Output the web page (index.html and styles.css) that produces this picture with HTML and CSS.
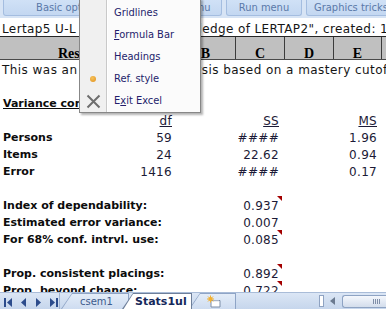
FILE: index.html
```html
<!DOCTYPE html>
<html lang="en">
<head>
    <meta charset="UTF-8">
    <meta name="viewport" content="width=device-width, initial-scale=1.0">
    <title>Lertap5 - Stats1ul</title>
    <link rel="stylesheet" href="styles.css">
</head>
<body>
    <div id="excel">
        <div class="ribbon">
            <div class="rb-btn w-basic">Basic options</div>
            <div class="rb-btn w-setup">Setup menu</div>
            <div class="rb-btn w-run">Run menu</div>
            <div class="rb-btn w-graph">Graphics tricks</div>
        </div>

        <div class="title-row">Lertap5 U-L analysis for "Knowledge of LERTAP2", created: 12/05/2008.</div>

        <div class="col-heads">
            <div class="ch ch-a">Results</div>
            <div class="ch ch-b">B</div>
            <div class="ch ch-c">C</div>
            <div class="ch ch-d">D</div>
            <div class="ch ch-e">E</div>
            <div class="ch ch-f"></div>
        </div>

        <div class="sheet">
            <div class="row"><span class="wide">This was an Upper-Lower analysis based on a mastery cutoff percentage of 70.</span></div>
            <div class="row"></div>
            <div class="row"><span class="lbl u">Variance components</span></div>
            <div class="row"><span class="df u">df</span><span class="ss u">SS</span><span class="ms u">MS</span></div>
            <div class="row"><span class="lbl">Persons</span><span class="df">59</span><span class="ss">####</span><span class="ms">1.96</span></div>
            <div class="row"><span class="lbl">Items</span><span class="df">24</span><span class="ss">22.62</span><span class="ms">0.94</span></div>
            <div class="row"><span class="lbl">Error</span><span class="df">1416</span><span class="ss">####</span><span class="ms">0.17</span></div>
            <div class="row"></div>
            <div class="row"><span class="lbl">Index of dependability:</span><span class="ss flag">0.937</span></div>
            <div class="row"><span class="lbl">Estimated error variance:</span><span class="ss">0.007</span></div>
            <div class="row"><span class="lbl">For 68% conf. intrvl. use:</span><span class="ss flag">0.085</span></div>
            <div class="row"></div>
            <div class="row"><span class="lbl">Prop. consistent placings:</span><span class="ss flag">0.892</span></div>
            <div class="row"><span class="lbl">Prop. beyond chance:</span><span class="ss flag">0.722</span></div>
        </div>

        <div class="tabbar">
            <div class="tab-nav">
                <svg width="56" height="9" viewBox="0 0 56 9">
                    <rect x="0" y="0" width="2" height="9" fill="#2c4c8c"/>
                    <polygon points="8,0 3,4.5 8,9" fill="#2c4c8c"/>
                    <polygon points="22,0 17,4.5 22,9" fill="#2c4c8c"/>
                    <polygon points="32,0 37,4.5 32,9" fill="#2c4c8c"/>
                    <polygon points="46,0 51,4.5 46,9" fill="#2c4c8c"/>
                    <rect x="52" y="0" width="2" height="9" fill="#2c4c8c"/>
                </svg>
            </div>
            <div class="tabs">
                <div class="tab t-csem"><div class="tab-in">csem1</div></div>
                <div class="tab t-stats"><div class="tab-in">Stats1ul</div></div>
                <div class="tab t-new">
                    <div class="tab-in">
                        <svg width="16" height="13" viewBox="0 0 16 13">
                            <path d="M5 5.5 H14 V12 H5 Z" fill="#fff" stroke="#7d8ea8"/>
                            <path d="M7 6 L13 6" stroke="#d8dee8"/>
                            <circle cx="4.5" cy="4" r="2" fill="#f2b030"/>
                            <path d="M4.5 0.5 V7.5 M1 4 H8 M2 1.5 L7 6.5 M7 1.5 L2 6.5" stroke="#f2b030" stroke-width="1"/>
                        </svg>
                    </div>
                </div>
            </div>
            <div class="hscroll">
                <div class="split"></div>
                <svg class="arrow" width="5" height="8" viewBox="0 0 5 8"><polygon points="5,0 0,4 5,8" fill="#6b7a90"/></svg>
                <div class="thumb"><span class="grip"></span></div>
            </div>
        </div>

        <div class="menu">
            <div class="mi">Gridlines</div>
            <div class="mi"><u>F</u>ormula Bar</div>
            <div class="mi">Headings</div>
            <div class="mi"><span class="mi-icon"><span class="dot"></span></span>Ref. style</div>
            <div class="mi">
                <span class="mi-icon">
                    <svg width="15" height="15" viewBox="0 0 15 15">
                        <path d="M1.5 1.5 L13.5 13.5 M13.5 1.5 L1.5 13.5" stroke="#6e6e6e" stroke-width="2"/>
                    </svg>
                </span>E<u>x</u>it Excel
            </div>
        </div>
    </div>
</body>
</html>
```

FILE: styles.css
```css
body {
    margin: 0;
    background: #fff;
    overflow: hidden;
}

#excel {
    position: relative;
    width: 386px;
    height: 309px;
    display: flex;
    flex-direction: column;
    overflow: hidden;
    font-family: "DejaVu Sans", Verdana, sans-serif;
    font-size: 12px;
    color: #151515;
}

/* add-in toolbar */
.ribbon {
    flex: none;
    height: 18px;
    display: flex;
    gap: 4px;
    padding: 0 3px;
    background: #d7e4f5;
    box-sizing: border-box;
}

.rb-btn {
    flex: none;
    height: 16px;
    box-sizing: border-box;
    border: 1px solid #a4bde0;
    border-top: none;
    border-radius: 0 0 3px 3px;
    background: linear-gradient(#d0e1f6, #c3d7f1);
    color: #5a79a9;
    font: 11px "DejaVu Sans Condensed", "Liberation Sans", sans-serif;
    line-height: 15px;
    text-align: center;
    white-space: nowrap;
    overflow: hidden;
}

.w-basic { width: 132px; }
.w-setup { width: 83px; }
.w-run { width: 76px; }
.w-graph { width: 90px; }

.title-row {
    flex: none;
    height: 19px;
    box-sizing: border-box;
    padding: 4px 0 0 2px;
    line-height: 14px;
    letter-spacing: 0.4px;
    white-space: nowrap;
    overflow: hidden;
    border-bottom: 1px solid #262626;
}

/* column header row */
.col-heads {
    flex: none;
    height: 23px;
    display: flex;
    background: #c0c0c0;
    border-bottom: 1px solid #4a4a4a;
    box-sizing: border-box;
}

.ch {
    flex: none;
    box-sizing: border-box;
    border-right: 1px solid #3c3c3c;
    padding-top: 9px;
    line-height: 13px;
    text-align: center;
    font: bold 14px "Liberation Serif", serif;
    color: #000;
}

.ch-a { width: 176px; text-align: left; padding-left: 58px; }
.ch-b { width: 60px; }
.ch-c { width: 49px; }
.ch-d { width: 49px; }
.ch-e { width: 48px; }
.ch-f { flex: 1; border-right: none; }

/* worksheet cells */
.sheet {
    flex: none;
    height: 232px;
    overflow: hidden;
}

.row {
    height: 17px;
    box-sizing: border-box;
    padding-top: 3px;
    line-height: 14px;
    letter-spacing: 0.3px;
    display: grid;
    grid-template-columns: 110px 62px 112px 97px 1fr;
    white-space: nowrap;
}

.wide {
    grid-column: 1 / -1;
    padding-left: 2px;
    letter-spacing: 0.45px;
    overflow: hidden;
}

.lbl {
    grid-column: 1;
    padding-left: 3px;
    font-size: 11px;
    font-weight: bold;
    letter-spacing: 0;
    color: #0c0c0c;
}

.df, .ss, .ms {
    text-align: right;
    color: #1c1a36;
}

.df { grid-column: 2; }
.ss { grid-column: 3; padding-right: 5px; position: relative; }
.ms { grid-column: 4; padding-right: 4px; }

.u { text-decoration: underline; }

.flag::after {
    content: "";
    position: absolute;
    top: -3px;
    right: 2px;
    border-top: 5px solid #a30000;
    border-left: 5px solid transparent;
}

/* sheet tabs */
.tabbar {
    flex: none;
    height: 17px;
    display: flex;
    box-sizing: border-box;
    border-top: 1px solid #a9bcd8;
    background: linear-gradient(#dbe6f5, #c6d6ec);
}

.tab-nav {
    width: 60px;
    box-sizing: border-box;
    padding: 3px 0 0 4px;
    border-right: 1px solid #9fb2cf;
}

.tabs {
    display: flex;
}

.tab {
    height: 16px;
    box-sizing: border-box;
    padding: 1px 1px 0 1px;
    background: #8ea4c6;
    clip-path: polygon(0 100%, 11px 0, 100% 0, 100% 100%);
}

.tab-in {
    height: 15px;
    box-sizing: border-box;
    background: linear-gradient(#e3ecf8, #cedcf0);
    clip-path: polygon(0 100%, 10px 0, 100% 0, 100% 100%);
    font-size: 10px;
    line-height: 15px;
    color: #3d5b8d;
    padding-left: 18px;
}

.t-csem { width: 68px; margin-left: 1px; }

.t-stats {
    width: 70px;
    margin-left: -7px;
    position: relative;
    z-index: 2;
    background: #6e7f9a;
}

.t-stats .tab-in {
    background: #fff;
    height: 16px;
    font-weight: bold;
    font-size: 11px;
    color: #15285a;
    padding-left: 12px;
}

.t-new { width: 47px; margin-left: -3px; }

.t-new .tab-in {
    padding: 1px 0 0 16px;
    line-height: 0;
}

.hscroll {
    margin-left: auto;
    display: flex;
    align-items: center;
}

.split {
    width: 3px;
    height: 10px;
    background: #fff;
    border: 1px solid #8fa3c2;
    margin-right: 6px;
}

.arrow {
    margin-right: 7px;
}

.thumb {
    width: 44px;
    height: 13px;
    box-sizing: border-box;
    border: 1px solid #8ea3c3;
    border-right: none;
    border-radius: 3px 0 0 3px;
    background: linear-gradient(#f4f7fc, #d3ddec);
    display: flex;
    align-items: center;
    padding-left: 30px;
}

.grip {
    width: 7px;
    height: 5px;
    background: repeating-linear-gradient(to right, #7f8ea8 0 1px, transparent 1px 2px);
}

/* popup menu */
.menu {
    position: absolute;
    left: 79px;
    top: -2px;
    width: 122px;
    box-sizing: border-box;
    padding-top: 3px;
    border: 1px solid #878787;
    background: linear-gradient(to right, #f0f0f0 0 26px, #c9c9c9 26px 27px, #fff 27px 28px, #fbfbfb 28px);
    box-shadow: 2px 2px 2px rgba(0, 0, 0, 0.3);
    z-index: 5;
    font: 11px "DejaVu Sans Condensed", "Liberation Sans", sans-serif;
    color: #241d6b;
}

.mi {
    height: 22px;
    line-height: 22px;
    padding-left: 34px;
    position: relative;
    white-space: nowrap;
}

.mi-icon {
    position: absolute;
    left: 0;
    top: 0;
    width: 26px;
    height: 22px;
    display: flex;
    align-items: center;
    justify-content: center;
}

.dot {
    width: 6px;
    height: 6px;
    border-radius: 50%;
    background: radial-gradient(circle at 40% 35%, #f6c25a, #e0901c);
}
```
